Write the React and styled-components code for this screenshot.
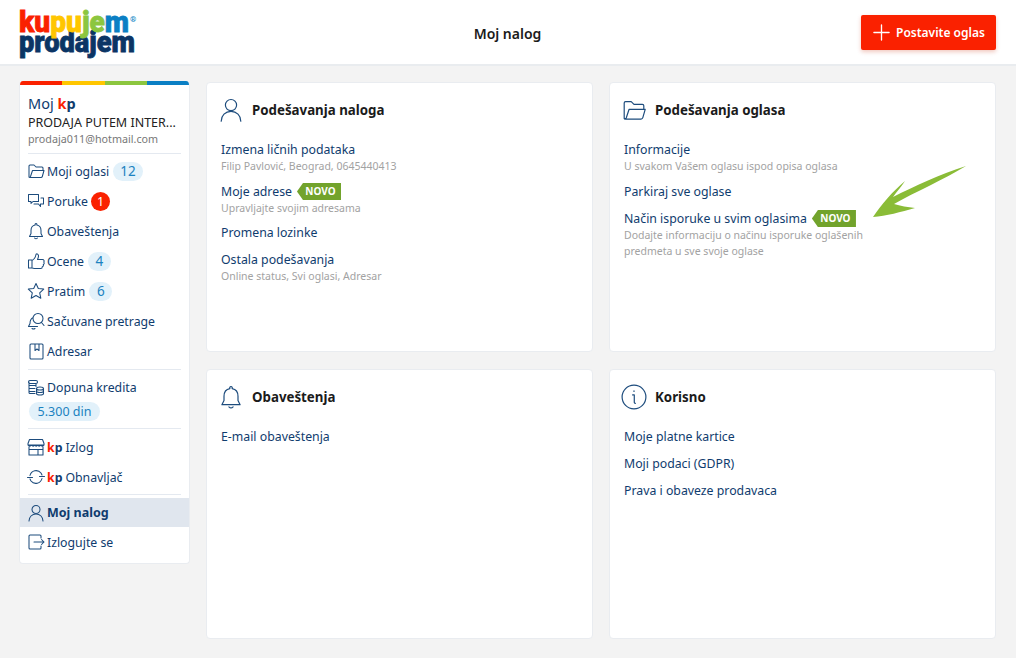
import React from 'react';
import styled, { createGlobalStyle } from 'styled-components';

const NAVY = '#0f3c6e';
const ICON = '#1d4c7d';

const GlobalStyle = createGlobalStyle`
  html, body {
    margin: 0;
    padding: 0;
    background: #f3f3f3;
    font-family: "Noto Sans", "Open Sans", sans-serif;
  }
  * { box-sizing: border-box; }
`;

const Page = styled.div`
  position: relative;
  width: 1016px;
  height: 658px;
  overflow: hidden;
`;

const Header = styled.header`
  height: 66px;
  background: #fff;
  border-bottom: 2px solid #e9ecef;
  padding: 8px 20px 0 19px;
  display: grid;
  grid-template-columns: 1fr auto 1fr;
`;

const LogoSvg = styled.svg`
  display: block;
  width: 120px;
  height: 52px;
  overflow: visible;
`;

const HeaderTitle = styled.h1`
  margin: 0;
  padding-top: 16px;
  font-size: 14px;
  line-height: 20px;
  font-weight: 600;
  color: #1b1b1b;
`;

const PostButton = styled.button`
  justify-self: end;
  width: 135px;
  height: 35px;
  margin-top: 7px;
  border: 0;
  border-radius: 2px;
  background: #fa2100;
  box-shadow: 0 2px 4px rgba(200, 40, 0, 0.25);
  color: #fff;
  font: 600 12px "Noto Sans", sans-serif;
  display: flex;
  align-items: center;
  gap: 5px;
  padding: 0 0 0 11px;
`;

const Main = styled.main`
  display: grid;
  grid-template-columns: 171px 790px;
  gap: 16px;
  padding: 15px 20px 0 19px;
  align-items: start;
`;

const Sidebar = styled.aside`
  background: #fff;
  border-radius: 4px;
  border: 1px solid #e9ecf0;
  border-top: 0;
  height: 483px;
  overflow: hidden;
`;

const Stripe = styled.div`
  display: grid;
  grid-template-columns: repeat(4, 1fr);
  height: 4px;
`;

const StripeCell = styled.div`
  background: ${(p) => p.$color};
`;

const Profile = styled.div`
  margin: 0 8px;
  padding: 9px 0 7px;
  border-bottom: 1px solid #e4e9f0;
`;

const MojKp = styled.div`
  font-size: 14.5px;
  line-height: 18px;
  color: ${NAVY};
`;

const KpMark = styled.b`
  font-weight: 700;
  color: ${NAVY};
  & > i {
    font-style: normal;
    color: #fa2100;
  }
`;

const NavKp = styled(KpMark)`
  margin-right: 3px;
`;

const ProfileName = styled.div`
  margin-top: 1px;
  font-size: 12.5px;
  line-height: 19px;
  color: #222;
  white-space: nowrap;
`;

const ProfileMail = styled.div`
  font-size: 10.75px;
  line-height: 14px;
  color: #777;
`;

const NavGroup = styled.div`
  margin: 0 8px;
  padding: ${(p) => p.$pad || '2px 0 3px'};
  border-bottom: ${(p) => (p.$plain ? '0' : '1px solid #e4e9f0')};
`;

const NavRow = styled.div`
  height: ${(p) => (p.$active ? 29 : 30)}px;
  display: flex;
  align-items: center;
  font-size: ${(p) => (p.$active ? 12.5 : 12.3)}px;
  font-weight: ${(p) => (p.$active ? 700 : 400)};
  color: ${NAVY};
  white-space: nowrap;
  ${(p) =>
    p.$active &&
    `
    background: #e0e6ee;
    margin: 0 -8px;
    padding-left: 8px;
  `}
  & > svg {
    margin: 0 1px 0 -2px;
  }
`;

const Count = styled.span`
  min-width: 23px;
  height: 19px;
  margin-left: 4px;
  padding: 0 7px;
  border-radius: 10px;
  background: #e2f1fa;
  color: #1b82c0;
  font-size: 13.5px;
  line-height: 19px;
  text-align: center;
`;

const RedCount = styled.span`
  width: 19px;
  height: 19px;
  margin-left: 3px;
  border-radius: 50%;
  background: #fa2100;
  color: #fff;
  font-size: 12.5px;
  line-height: 19px;
  text-align: center;
`;

const BalancePill = styled.div`
  width: 71px;
  height: 19px;
  margin: 0 0 0 1px;
  border-radius: 10px;
  background: #e2f1fa;
  color: #1b82c0;
  font-size: 12.5px;
  line-height: 19px;
  text-align: center;
`;

const Cards = styled.div`
  display: grid;
  grid-template-columns: 387px 387px;
  grid-auto-rows: 270px;
  gap: 17px 16px;
  padding-top: 1px;
`;

const Card = styled.section`
  background: #fff;
  border: 1px solid #e9ecf0;
  border-radius: 4px;
  padding: 12px 14px;
`;

const CardHead = styled.div`
  height: 30px;
  display: flex;
  align-items: center;
  gap: 7px;
  margin-bottom: 15px;
  & > svg {
    margin-left: -4px;
  }
`;

const CardTitle = styled.h2`
  margin: 0;
  font-size: 13.3px;
  font-weight: 700;
  color: #1b1b1b;
`;

const Entry = styled.div`
  margin-bottom: ${(p) => p.$gap || 8}px;
`;

const EntryLink = styled.div`
  display: flex;
  align-items: center;
  gap: 5px;
  height: 19px;
  font-size: 12.3px;
  color: ${NAVY};
`;

const EntryNote = styled.div`
  width: 260px;
  margin: -1px 0 1px;
  font-size: 10.5px;
  line-height: 16px;
  color: #a2a2a2;
  white-space: pre-line;
`;

const NovoTag = styled.span`
  width: 44px;
  height: 17px;
  padding-left: 3px;
  background: #72a32c;
  clip-path: polygon(6px 0, 100% 0, 100% 100%, 6px 100%, 0 50%);
  color: #fff;
  font-size: 10px;
  font-weight: 700;
  line-height: 17px;
  text-align: center;
`;

const ArrowOverlay = styled.svg`
  position: absolute;
  left: 860px;
  top: 160px;
  width: 115px;
  height: 65px;
`;

const Glyph = styled.svg`
  flex: none;
  width: ${(p) => p.$size || 20}px;
  height: ${(p) => p.$size || 20}px;
  fill: none;
  stroke: ${(p) => p.$color || ICON};
  stroke-width: ${(p) => p.$weight || 1.05};
  stroke-linecap: round;
  stroke-linejoin: round;
`;

const Icon = ({ d, size, weight, color }) => (
  <Glyph viewBox="0 0 20 20" $size={size} $weight={weight} $color={color}>
    <path d={d} />
  </Glyph>
);

const paths = {
  folder: 'M3 16V5q0-1 1-1h4l2 2h6q1 0 1 1v2M3 16q0 .5 1 .5h11q1 0 1.300-1L18 9.500H6.500L4.500 15.500Q4 16.500 3 16Z',
  chat: 'M2.500 3.500h10v7H7l-2 2v-2H2.500ZM8 13h4.500l2 2.500v-2.500H17.500V7H15',
  bell: 'M10 2.500a1 1 0 0 1 .800 1.500c3 .500 4.200 3 4.200 5.500v3l1.500 3h-13l1.500-3v-3c0-2.500 1.200-5 4.200-5.500A1 1 0 0 1 10 2.500ZM8.500 17q1.500 1.500 3 0',
  thumb: 'M2.500 9h3.500v8H2.500ZM6 9.500c2-1 3.500-3.500 4-6 .2-1 2.500-1 2.500 1.500 0 1-.5 2.500-1 3.500h5c1.500 0 2 1.500 1.300 2.500.700 1 .3 2.200-.5 2.500.300 1-.2 2-1 2.300 0 1-.5 1.700-1.500 1.700H9c-1.500 0-2-.5-3-.5',
  star: 'M10 2.500l2.300 5 5.400.600-4 3.700 1.100 5.400L10 14.500 5.200 17.200l1.100-5.400-4-3.700 5.400-.600Z',
  searchBell: 'M12 2.500a5 5 0 1 1 0 10 5 5 0 0 1 0-10ZM15.500 11.500l2.500 3M7.200 6.500C5 7.500 4 10 4 12.500L2.500 15.500h9M6 17.500q1.500 1 3 0',
  book: 'M4 4q0-1 1-1h11q1 0 1 1v13q0 1-1 1H5q-1 0-1-1ZM9 3v6.500l2-1.500 2 1.500V3',
  coins: 'M4 3.500h6a1 1 0 0 1 0 3H4a1 1 0 0 1 0-3ZM3 5v10.500q0 1 1 1h5M10 6.500v3M3 8.500h7M3 11.500h6M3 14.500h6M14 10c2 0 3.500.600 3.500 1.500S16 13 14 13s-3.500-.600-3.500-1.500S12 10 14 10ZM10.500 11.500v5c0 .900 1.500 1.500 3.500 1.500s3.500-.600 3.500-1.500v-5M10.500 14c0 .900 1.500 1.500 3.500 1.500s3.500-.600 3.500-1.500',
  store: 'M3.500 2.500h13l1.500 4v1.500H2V6.500ZM2 8c1 1.500 2.500 1.500 3.500 0 1 1.500 2.500 1.500 3 0 1 1.500 2.500 1.500 3 0 1 1.500 2.500 1.500 3 0 1 1.500 2.500 1.500 3.500 0M3 10v8h14v-8M3 12.500h9V18M12 12.500h5',
  sync: 'M4 8.500a6.300 6.300 0 0 1 11-2.500l1 2M16 11.500a6.300 6.300 0 0 1-11 2.500l-1-2M1.500 10.500h5M13.500 9.500h5',
  user: 'M10 2.500a4 4 0 1 1 0 8 4 4 0 0 1 0-8ZM3 18c0-4 3-7 7-7s7 3 7 7',
  logout: 'M15 6V4q0-1-1-1H4q-1 0-1 1v12q0 1 1 1h10q1 0 1-1v-2M8 10h10M15.500 7.500 18 10l-2.500 2.500',
  info: 'M10 1.500a8.500 8.500 0 1 1 0 17 8.500 8.500 0 0 1 0-17ZM9 8.500h1.200v5.500q0 .5.800.5M10 5.600v.4',
  plus: 'M10 2v16M2 10h16',
};

const Kp = ({ as: Mark = KpMark }) => (
  <Mark>
    <i>k</i>p
  </Mark>
);

const Logo = () => (
  <LogoSvg viewBox="0 0 120 52" aria-label="kupujem prodajem">
    <g fontFamily="Roboto, sans-serif" fontWeight="900" fontSize="29" strokeWidth="0.8">
      <text x="0" y="44" textLength="116" lengthAdjust="spacingAndGlyphs" fill="#0b3565" stroke="#0b3565">prodajem</text>
      <text x="0" y="24" textLength="110" lengthAdjust="spacingAndGlyphs">
        <tspan fill="#fa2100" stroke="#fa2100">ku</tspan>
        <tspan fill="#ffc600" stroke="#ffc600">pu</tspan>
        <tspan fill="#8cc63f" stroke="#8cc63f">je</tspan>
        <tspan fill="#0a7fc4" stroke="#0a7fc4">m</tspan>
      </text>
    </g>
    <text x="111" y="14" fontFamily="Roboto, sans-serif" fontWeight="700" fontSize="8" fill="#0a7fc4">®</text>
  </LogoSvg>
);

const NavLink = ({ icon, children, active }) => (
  <NavRow $active={active}>
    <Icon d={paths[icon]} />
    {children}
  </NavRow>
);

const App = () => (
  <Page>
    <GlobalStyle />
    <Header>
      <Logo />
      <HeaderTitle>Moj nalog</HeaderTitle>
      <PostButton>
        <Icon d={paths.plus} size={19} weight={1.4} color="#fff" />
        Postavite oglas
      </PostButton>
    </Header>
    <Main>
      <Sidebar>
        <Stripe>
          <StripeCell $color="#fa2100" />
          <StripeCell $color="#ffc600" />
          <StripeCell $color="#8cc63f" />
          <StripeCell $color="#0a7fc4" />
        </Stripe>
        <Profile>
          <MojKp>
            Moj <Kp />
          </MojKp>
          <ProfileName>PRODAJA PUTEM INTER...</ProfileName>
          <ProfileMail>prodaja011@hotmail.com</ProfileMail>
        </Profile>
        <NavGroup>
          <NavLink icon="folder">Moji oglasi<Count>12</Count></NavLink>
          <NavLink icon="chat">Poruke<RedCount>1</RedCount></NavLink>
          <NavLink icon="bell">Obaveštenja</NavLink>
          <NavLink icon="thumb">Ocene<Count>4</Count></NavLink>
          <NavLink icon="star">Pratim<Count>6</Count></NavLink>
          <NavLink icon="searchBell">Sačuvane pretrage</NavLink>
          <NavLink icon="book">Adresar</NavLink>
        </NavGroup>
        <NavGroup $pad="2px 0 7px">
          <NavLink icon="coins">Dopuna kredita</NavLink>
          <BalancePill>5.300 din</BalancePill>
        </NavGroup>
        <NavGroup $pad="3px 0 2px">
          <NavLink icon="store"><Kp as={NavKp} />Izlog</NavLink>
          <NavLink icon="sync"><Kp as={NavKp} />Obnavljač</NavLink>
        </NavGroup>
        <NavGroup $plain $pad="3px 0 0">
          <NavLink icon="user" active>Moj nalog</NavLink>
          <NavLink icon="logout">Izlogujte se</NavLink>
        </NavGroup>
      </Sidebar>
      <Cards>
        <Card>
          <CardHead>
            <Icon d={paths.user} size={28} weight={0.85} />
            <CardTitle>Podešavanja naloga</CardTitle>
          </CardHead>
          <Entry>
            <EntryLink>Izmena ličnih podataka</EntryLink>
            <EntryNote>Filip Pavlović, Beograd, 0645440413</EntryNote>
          </Entry>
          <Entry $gap={7}>
            <EntryLink>Moje adrese<NovoTag>NOVO</NovoTag></EntryLink>
            <EntryNote>Upravljajte svojim adresama</EntryNote>
          </Entry>
          <Entry>
            <EntryLink>Promena lozinke</EntryLink>
          </Entry>
          <Entry>
            <EntryLink>Ostala podešavanja</EntryLink>
            <EntryNote>Online status, Svi oglasi, Adresar</EntryNote>
          </Entry>
        </Card>
        <Card>
          <CardHead>
            <Icon d={paths.folder} size={28} weight={0.85} />
            <CardTitle>Podešavanja oglasa</CardTitle>
          </CardHead>
          <Entry>
            <EntryLink>Informacije</EntryLink>
            <EntryNote>U svakom Vašem oglasu ispod opisa oglasa</EntryNote>
          </Entry>
          <Entry>
            <EntryLink>Parkiraj sve oglase</EntryLink>
          </Entry>
          <Entry>
            <EntryLink>Način isporuke u svim oglasima<NovoTag>NOVO</NovoTag></EntryLink>
            <EntryNote>{'Dodajte informaciju o načinu isporuke oglašenih\npredmeta u sve svoje oglase'}</EntryNote>
          </Entry>
        </Card>
        <Card>
          <CardHead>
            <Icon d={paths.bell} size={28} weight={0.85} />
            <CardTitle>Obaveštenja</CardTitle>
          </CardHead>
          <Entry>
            <EntryLink>E-mail obaveštenja</EntryLink>
          </Entry>
        </Card>
        <Card>
          <CardHead>
            <Icon d={paths.info} size={28} weight={0.85} />
            <CardTitle>Korisno</CardTitle>
          </CardHead>
          <Entry>
            <EntryLink>Moje platne kartice</EntryLink>
          </Entry>
          <Entry>
            <EntryLink>Moji podaci (GDPR)</EntryLink>
          </Entry>
          <Entry>
            <EntryLink>Prava i obaveze prodavaca</EntryLink>
          </Entry>
        </Card>
      </Cards>
    </Main>
    <ArrowOverlay viewBox="860 160 115 65">
      <path
        fill="#8abc37"
        d="M966 166C940 174 915 186 893 197C897 191 902 186 905 181C893 191 881 205 873 217C886 216 901 212 915 208C908 207 900 206 894 204C915 192 945 179 966 166Z"
      />
    </ArrowOverlay>
  </Page>
);

export default App;
